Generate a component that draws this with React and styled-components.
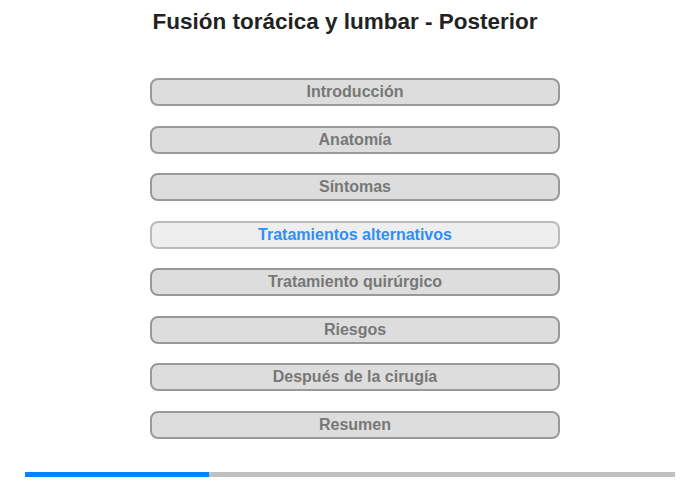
import React from "react";
import styled, { createGlobalStyle } from "styled-components";

const GlobalStyle = createGlobalStyle`
  body {
    margin: 0;
    background: #fff;
    font-family: "Liberation Sans", Arial, sans-serif;
  }
`;

const sections = [
  "Introducción",
  "Anatomía",
  "Síntomas",
  "Tratamientos alternativos",
  "Tratamiento quirúrgico",
  "Riesgos",
  "Después de la cirugía",
  "Resumen",
];

const Page = styled.div`
  width: 700px;
  display: flex;
  flex-direction: column;
  align-items: center;
`;

const Title = styled.h1`
  margin: 0;
  padding-top: 9px;
  padding-right: 10px;
  font-size: 22.5px;
  line-height: 26px;
  font-weight: bold;
  color: #222;
`;

const Menu = styled.nav`
  display: flex;
  flex-direction: column;
  gap: 19.5px;
  width: 410px;
  margin-top: 43px;
  padding-left: 10px;
`;

const MenuButton = styled.div`
  box-sizing: border-box;
  height: 28px;
  border: 2px solid ${(p) => (p.$active ? "#bbb" : "#999")};
  border-radius: 8px;
  background: ${(p) => (p.$active ? "#eee" : "#ddd")};
  color: ${(p) => (p.$active ? "#2f8ff4" : "#777")};
  font-size: 16px;
  font-weight: bold;
  display: flex;
  align-items: center;
  justify-content: center;
  cursor: pointer;
`;

const Progress = styled.div`
  width: 650px;
  height: 5px;
  margin-top: 33px;
  background: #c0c0c0;
`;

const ProgressFill = styled.div`
  height: 100%;
  background: #0084ff;
`;

export default function App() {
  const current = 3;
  return (
    <Page>
      <GlobalStyle />
      <Title>Fusión torácica y lumbar - Posterior</Title>
      <Menu>
        {sections.map((s, i) => (
          <MenuButton key={s} $active={i === current}>
            {s}
          </MenuButton>
        ))}
      </Menu>
      <Progress>
        <ProgressFill style={{ width: `${(184 / 650) * 100}%` }} />
      </Progress>
    </Page>
  );
}
